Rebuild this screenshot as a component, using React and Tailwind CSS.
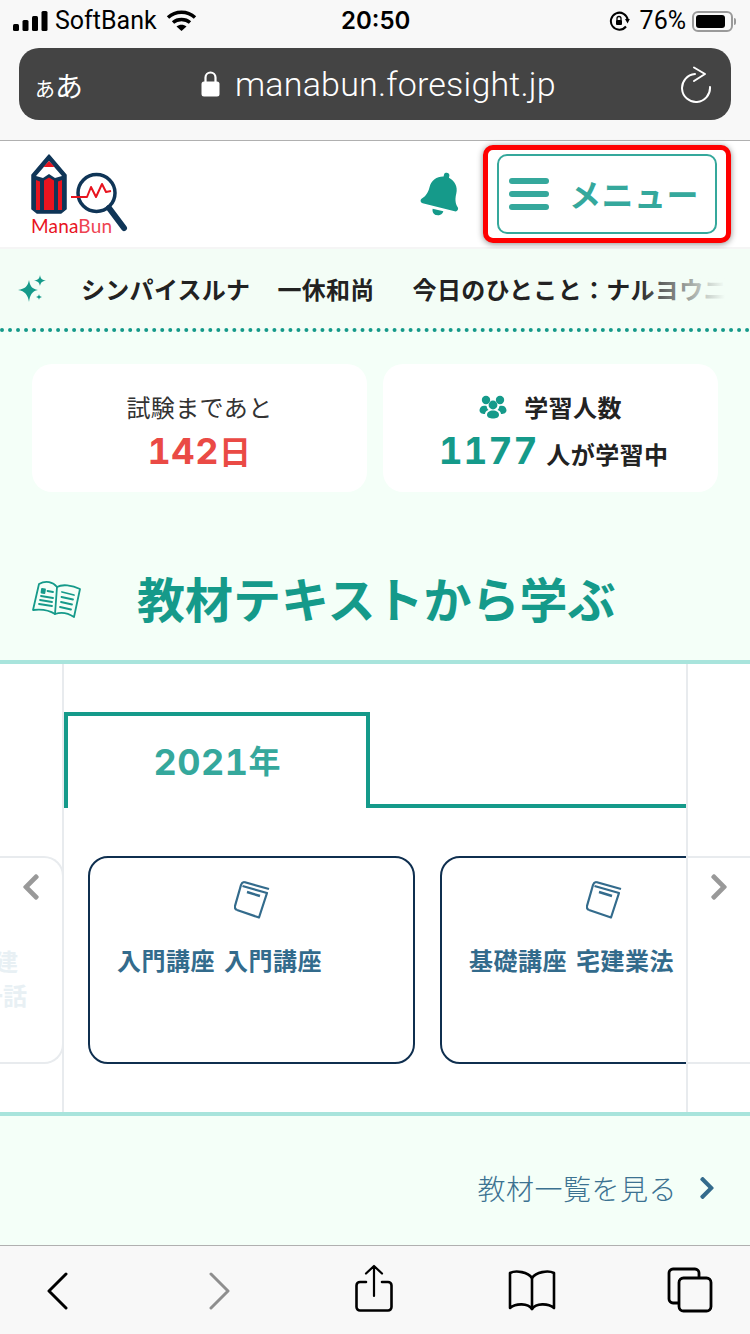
import React from 'react';
import { FaBell, FaChevronLeft, FaChevronRight } from 'react-icons/fa';

const cjk = 'font-["Noto_Sans_CJK_JP",sans-serif]';
const latin = 'font-["Inter","Noto_Sans_CJK_JP",sans-serif] tabular-nums';

function Logo() {
  return (
    <svg width="100" height="85" viewBox="30 152 100 85" fill="none">
      <path d="M49 155 L66 175 V209 L61 213 H37 L32 209 V175 Z" fill="#0f3557" stroke="#0f3557" strokeWidth="1.5" strokeLinejoin="round" />
      <path d="M49 161 L62 176 L55 178 L49 174 L43 178 L36 176 Z" fill="#fff" />
      <path d="M49 161 L54.5 167 H43.5 Z" fill="#e8141f" />
      <path d="M36 180 L40 181.5 V210 H36 Z M44 180.5 L49 177.5 L54 180.5 V210 H44 Z M58 181.5 L62 180 V210 H58 Z" fill="#e8141f" />
      <circle cx="96.5" cy="193" r="18.5" stroke="#0f3557" strokeWidth="3.5" />
      <path d="M109 208 L124 228" stroke="#0f3557" strokeWidth="6" strokeLinecap="round" />
      <path d="M71 197 H87 L91 187 L96 197 L102 184 L106 192 L111 191" stroke="#e8141f" strokeWidth="2" strokeLinejoin="round" />
      <text x="31" y="233" fontSize="19" fontFamily="Lato, sans-serif" textLength="81">
        <tspan fill="#e8141f">Mana</tspan>
        <tspan fill="#ee4452">Bun</tspan>
      </text>
    </svg>
  );
}

function Sparkle() {
  return (
    <svg width="28" height="28" viewBox="0 0 28 28" fill="#159a8a" className="block shrink-0">
      <path d="M11 5 C12 11 14 14 20 15 C14 16 12 20 11 27 C10 20 7 16 0 15 C7 14 10 11 11 5 Z" />
      <path d="M22 0 C22.5 3.5 24 5 28 5.5 C24 6 22.5 8 22 11 C21.5 8 20 6 16 5.5 C20 5 21.5 3.5 22 0 Z" />
      <path d="M21 19 C21.3 20.8 22 21.6 24 22 C22 22.4 21.3 23.2 21 25 C20.7 23.2 20 22.4 18 22 C20 21.6 20.7 20.8 21 19 Z" />
    </svg>
  );
}

function BookIcon() {
  return (
    <svg width="36" height="38" viewBox="0 0 36 38" fill="none" stroke="#336b8c" strokeWidth="2.2" strokeLinejoin="round" className="block">
      <path d="M10 1 L35 8" />
      <path d="M10 1 C8 1.5 7.5 2.5 7 4 L1 25 C0.5 27 1 28 3 29" />
      <path d="M8.5 5 L33 12 L25 36.5 L3 29" />
      <path d="M13 11 L26 15" strokeWidth="2.4" />
    </svg>
  );
}

function PeopleIcon() {
  return (
    <svg width="28" height="24" viewBox="0 0 28 24" fill="#159a8a" className="block">
      <circle cx="7" cy="5" r="4.2" />
      <circle cx="21" cy="5" r="4.2" />
      <circle cx="14" cy="10" r="4.4" />
      <path d="M0.5 15 C1 11 4 10 7.5 11 C8 13 8.5 14 9.5 15 C7 16 6 17.5 6 19 C3 19 0.5 18 0.5 15 Z" />
      <path d="M27.5 15 C27 11 24 10 20.5 11 C20 13 19.5 14 18.5 15 C21 16 22 17.5 22 19 C25 19 27.5 18 27.5 15 Z" />
      <path d="M8 20 C8 17 10.5 15.5 14 15.5 C17.5 15.5 20 17 20 20 C20 22.5 17 23.5 14 23.5 C11 23.5 8 22.5 8 20 Z" />
    </svg>
  );
}

function OpenBook() {
  return (
    <svg width="50" height="40" viewBox="0 0 50 40" fill="none" stroke="#159a8a" strokeWidth="1.8" strokeLinejoin="round" strokeLinecap="round" className="block">
      <path d="M7 4 C14 0 21 2 25 7 C30 4 40 5 48 9 L42 37 C36 33 29 32 23 34 C17 30 9 29 1 30 Z" />
      <path d="M25 7 L23 34" />
      <path d="M10 9 L13 9.5 L12.4 13 L9.5 12.5 Z" fill="#159a8a" />
      <path d="M15.5 11 L21 12 M9 16 L21 18 M8 20 L20 22 M7 24 L20 26" />
      <path d="M30 12 L42 15 M29.5 17 L41 19.5 M29 22 L40 24.5 M28 27 L39 29.5" />
    </svg>
  );
}

function StatusBar() {
  return (
    <div className="flex items-center h-[48px] pb-[6px] pl-[13px] pr-[14px] text-black font-['Roboto',sans-serif] text-[25px] relative">
      <svg width="35" height="20" viewBox="0 0 35 20" fill="#000" className="block">
        <rect x="0" y="13" width="6" height="7" rx="1.5" />
        <rect x="9.5" y="9" width="6" height="11" rx="1.5" />
        <rect x="19" y="5" width="6" height="15" rx="1.5" />
        <rect x="28.5" y="0" width="6" height="20" rx="1.5" />
      </svg>
      <span className="ml-[7px]">SoftBank</span>
      <svg width="31" height="22" viewBox="0 0 31 22" fill="none" stroke="#000" strokeWidth="3.4" className="block ml-[9px]">
        <path d="M2 7.5 C9.5 0.5 21.5 0.5 29 7.5" />
        <path d="M7 12.5 C11.5 8.5 19.5 8.5 24 12.5" />
        <path d="M15.5 21 L10.5 16.5 C13.5 14.2 17.5 14.2 20.5 16.5 Z" fill="#000" stroke="none" />
      </svg>
      <span className="absolute left-[341px] font-['Inter',sans-serif] text-[24px] font-semibold">20:50</span>
      <div className="ml-auto flex items-center">
        <svg width="21" height="21" viewBox="0 0 21 21" fill="none" stroke="#000" strokeWidth="2" className="block">
          <path d="M17 15.5 A8.5 8.5 0 1 1 18.8 9" />
          <path d="M20.8 8 L16 8 L18.6 12.5 Z" fill="#000" stroke="none" />
          <rect x="7" y="9" width="6" height="5" rx="1" fill="#000" stroke="none" />
          <path d="M8 9.5 V7.5 A2 2 0 0 1 12 7.5 V9.5" strokeWidth="1.3" />
        </svg>
        <span className="ml-[10px]">76%</span>
        <div className="ml-[6px] w-[41px] h-[21px] rounded-[6px] border-2 border-[#9a9a9a] p-[2px] flex">
          <div className="h-full w-[29px] rounded-[3px] bg-black" />
        </div>
        <div className="w-[2px] h-[7px] bg-[#9a9a9a] rounded-r-sm ml-[1px]" />
      </div>
    </div>
  );
}

function UrlBar() {
  return (
    <div className="mx-[19px] h-[72px] rounded-[20px] bg-[#444444] text-white flex items-center relative">
      <span className={`ml-[16px] mt-[2px] ${cjk} leading-none`}>
        <span className="text-[20px]">あ</span>
        <span className="text-[28px]">あ</span>
      </span>
      <svg width="19" height="26" viewBox="0 0 19 26" className="block absolute left-[182px] top-[23px]">
        <path d="M4.5 11 V6.5 A5 5 0 0 1 14.5 6.5 V11" fill="none" stroke="#fff" strokeWidth="2.2" />
        <rect x="0.5" y="10.5" width="18" height="15" rx="2.5" fill="#fff" />
      </svg>
      <span className="absolute left-[216px] top-[16px] text-[34px] leading-[40px] tracking-[0.2px] font-['Roboto',sans-serif] font-light">manabun.foresight.jp</span>
      <svg width="32" height="38" viewBox="0 0 32 38" fill="none" stroke="#fff" strokeWidth="2" strokeLinecap="round" strokeLinejoin="round" className="block absolute left-[662px] top-[18px]">
        <path d="M14 8 A14 14 0 1 0 29 21" />
        <path d="M13 1.5 L24 8 L13 15" />
      </svg>
    </div>
  );
}

function AppHeader() {
  return (
    <div className="h-[108px] bg-white flex items-start border-b-2 border-[#f5f5f5]">
      <div className="ml-[30px] mt-[11px]"><Logo /></div>
      <FaBell className="ml-[290px] mt-[31px] text-[#159a8a] text-[44px] rotate-[14deg]" />
      <div className="ml-[19px] mt-[4px] w-[248px] h-[98px] rounded-[10px] border-[5px] border-[#ff0000] shadow-[0_1px_6px_rgba(0,0,0,0.45)] bg-white flex items-center justify-center">
        <div className="w-[220px] h-[80px] rounded-[10px] border-2 border-[#35a89c] flex items-center pl-[10px]">
          <div className="w-[40px] flex flex-col gap-[7px]">
            <div className="h-[6px] rounded-full bg-[#35a89c]" />
            <div className="h-[6px] rounded-full bg-[#35a89c]" />
            <div className="h-[6px] rounded-full bg-[#35a89c]" />
          </div>
          <span className={`ml-[20px] -mt-[3px] text-[32px] leading-none font-bold tracking-[0.5px] text-[#35a89c] ${cjk}`}>メニュー</span>
        </div>
      </div>
    </div>
  );
}

function Ticker() {
  return (
    <div className="h-[83px] flex items-center bg-[#f3fdf6] border-b-[4px] border-dotted border-[#159a8a] pt-[1px]">
      <div className="ml-[18px]"><Sparkle /></div>
      <div className="relative ml-[35px] w-[644px] overflow-hidden">
        <div className={`whitespace-nowrap text-[24px] leading-[34px] font-bold tracking-[0.3px] text-[#222] ${cjk} flex`}>
          <span>シンパイスルナ</span>
          <span className="ml-[27px]">一休和尚</span>
          <span className="ml-[38px]">今日のひとこと：ナルヨウニナル</span>
        </div>
        <div className="absolute right-0 top-0 bottom-0 w-[90px] bg-gradient-to-r from-[#f3fdf600] to-[#f3fdf6]" />
      </div>
    </div>
  );
}

function Stats() {
  return (
    <div className={`flex gap-[16px] pl-[32px] pt-[32px] ${cjk}`}>
      <div className="w-[335px] h-[128px] rounded-[20px] bg-white flex flex-col items-center">
        <div className="mt-[25px] text-[24px] leading-[36px] tracking-[0.4px] text-[#333]">試験まであと</div>
        <div className={`mt-[4px] text-[36px] leading-[44px] font-bold tracking-[0.5px] text-[#ea4a45] ${latin}`}>142<span className="text-[32px]">日</span></div>
      </div>
      <div className="w-[335px] h-[128px] rounded-[20px] bg-white flex flex-col items-center">
        <div className="mt-[25px] flex items-center gap-[17px] text-[24px] leading-[36px] font-bold tracking-[0.4px] text-[#222]">
          <PeopleIcon />
          <span>学習人数</span>
        </div>
        <div className="mt-[4px] pl-[6px] flex items-baseline text-[#222] font-bold text-[24px] leading-[44px]">
          <span className={`text-[37px] tracking-[1px] text-[#159a8a] ${latin}`}>1177</span>
          <span className="ml-[8px] tracking-[0.4px]">人が学習中</span>
        </div>
      </div>
    </div>
  );
}

function CourseCard({ children }) {
  return (
    <div className="w-[327px] h-[208px] shrink-0 rounded-[20px] border-2 border-[#0f2f4f] bg-white flex flex-col">
      <div className="mt-[23px] flex justify-center"><BookIcon /></div>
      <div className={`mt-[24px] pl-[27px] whitespace-nowrap text-[24px] leading-[34px] font-bold tracking-[0.5px] [word-spacing:3px] text-[#336b8c] ${cjk}`}>{children}</div>
    </div>
  );
}

function Carousel() {
  return (
    <div className="h-[448px] bg-white flex relative">
      <div className="w-[64px] shrink-0 pt-[192px] border-r-2 border-[#e8ebee]">
        <div className={`h-[208px] -mr-[2px] rounded-r-[20px] border-y-2 border-r-2 border-[#e8ebee] overflow-hidden flex flex-col items-end pt-[86px] text-[24px] leading-[34px] font-bold text-[#e8f0f4] ${cjk}`}>
          <span className="mr-[44px] whitespace-nowrap">宅建</span>
          <span className="mr-[35px] whitespace-nowrap">第一話</span>
        </div>
      </div>
      <div className="w-[624px] shrink-0 border-r-2 border-[#e8ebee] overflow-hidden pt-[48px]">
        <div className="flex">
          <div className={`w-[306px] h-[96px] border-x-4 border-t-4 border-[#159a8a] flex items-center justify-center font-bold text-[#35a89c] ${latin}`}>
            <span className="text-[36px] tracking-[0.5px] leading-none">2021</span>
            <span className="text-[32px] leading-none">年</span>
          </div>
          <div className="flex-1 h-[96px] border-b-4 border-[#159a8a]" />
        </div>
        <div className="flex gap-[25px] pl-[24px] pt-[48px]">
          <CourseCard>入門講座 入門講座</CourseCard>
          <CourseCard>基礎講座 宅建業法</CourseCard>
        </div>
      </div>
      <div className="flex-1 pt-[192px]">
        <div className="h-[208px] border-y-2 border-[#e8ebee]" />
      </div>
      <FaChevronLeft className="absolute left-[16px] top-[208px] text-[#999] text-[30px]" />
      <FaChevronRight className="absolute left-[704px] top-[208px] text-[#999] text-[30px]" />
    </div>
  );
}

function Toolbar() {
  return (
    <div className="h-[89px] bg-[#f8f8f8] border-t border-[#b0b0b0] relative">
      <div className="flex items-start h-full">
        <svg width="24" height="38" viewBox="0 0 24 38" fill="none" stroke="#000" strokeWidth="3" strokeLinecap="round" strokeLinejoin="round" className="block ml-[46px] mt-[26px]">
          <path d="M20 2 L3 19 L20 36" />
        </svg>
        <svg width="24" height="38" viewBox="0 0 24 38" fill="none" stroke="#8e8e8e" strokeWidth="3" strokeLinecap="round" strokeLinejoin="round" className="block ml-[137px] mt-[26px]">
          <path d="M4 2 L21 19 L4 36" />
        </svg>
        <svg width="40" height="50" viewBox="0 0 40 50" fill="none" stroke="#000" strokeWidth="2.6" strokeLinecap="round" strokeLinejoin="round" className="block ml-[123px] mt-[18px]">
          <path d="M12 18 H6 A3.5 3.5 0 0 0 2.5 21.5 V43 A3.5 3.5 0 0 0 6 46.5 H34 A3.5 3.5 0 0 0 37.5 43 V21.5 A3.5 3.5 0 0 0 34 18 H28" />
          <path d="M20 32 V2 M12 9.5 L20 2 L28 9.5" strokeWidth="2.2" />
        </svg>
        <svg width="48" height="42" viewBox="0 0 48 42" fill="none" stroke="#000" strokeWidth="2.6" strokeLinejoin="round" strokeLinecap="round" className="block ml-[114px] mt-[23px]">
          <path d="M24 9 C20 3 8 1 2 4 V39 C8 34 20 34 24 40 C28 34 40 34 46 39 V4 C40 1 28 3 24 9 Z" />
          <path d="M24 9 V40" />
        </svg>
        <svg width="46" height="46" viewBox="0 0 46 46" fill="none" stroke="#000" strokeWidth="2.8" strokeLinejoin="round" className="block ml-[111px] mt-[21px]">
          <path d="M11 36 H6 A4 4 0 0 1 2 32 V6 A4 4 0 0 1 6 2 H28 A4 4 0 0 1 32 6 V10" />
          <rect x="12" y="11" width="32" height="33" rx="4.5" />
        </svg>
      </div>
    </div>
  );
}

export default function App() {
  return (
    <div className="w-[750px] h-[1334px] overflow-hidden flex flex-col bg-[#f4fff8]">
      <div className="h-[141px] shrink-0 bg-[#f8f8f8] border-b border-[#b0b0b0]">
        <StatusBar />
        <UrlBar />
      </div>
      <AppHeader />
      <Ticker />
      <Stats />
      <div className={`h-[172px] shrink-0 pl-[32px] pt-[48px] flex items-center border-b-[4px] border-[#a8e4dc] ${cjk}`}>
        <OpenBook />
        <span className="ml-[55px] -mt-[6px] text-[48px] font-bold text-[#159a8a] leading-none">教材テキストから学ぶ</span>
      </div>
      <Carousel />
      <div className={`h-[133px] shrink-0 border-t-[4px] border-[#a8e4dc] pt-[15px] flex items-center justify-end pr-[30px] text-[#3c7291] text-[28px] ${cjk}`}>
        <span className="font-light tracking-[0.5px]">教材一覧を見る</span>
        <FaChevronRight className="ml-[17px] text-[#336b8c] text-[26px]" />
      </div>
      <Toolbar />
    </div>
  );
}
